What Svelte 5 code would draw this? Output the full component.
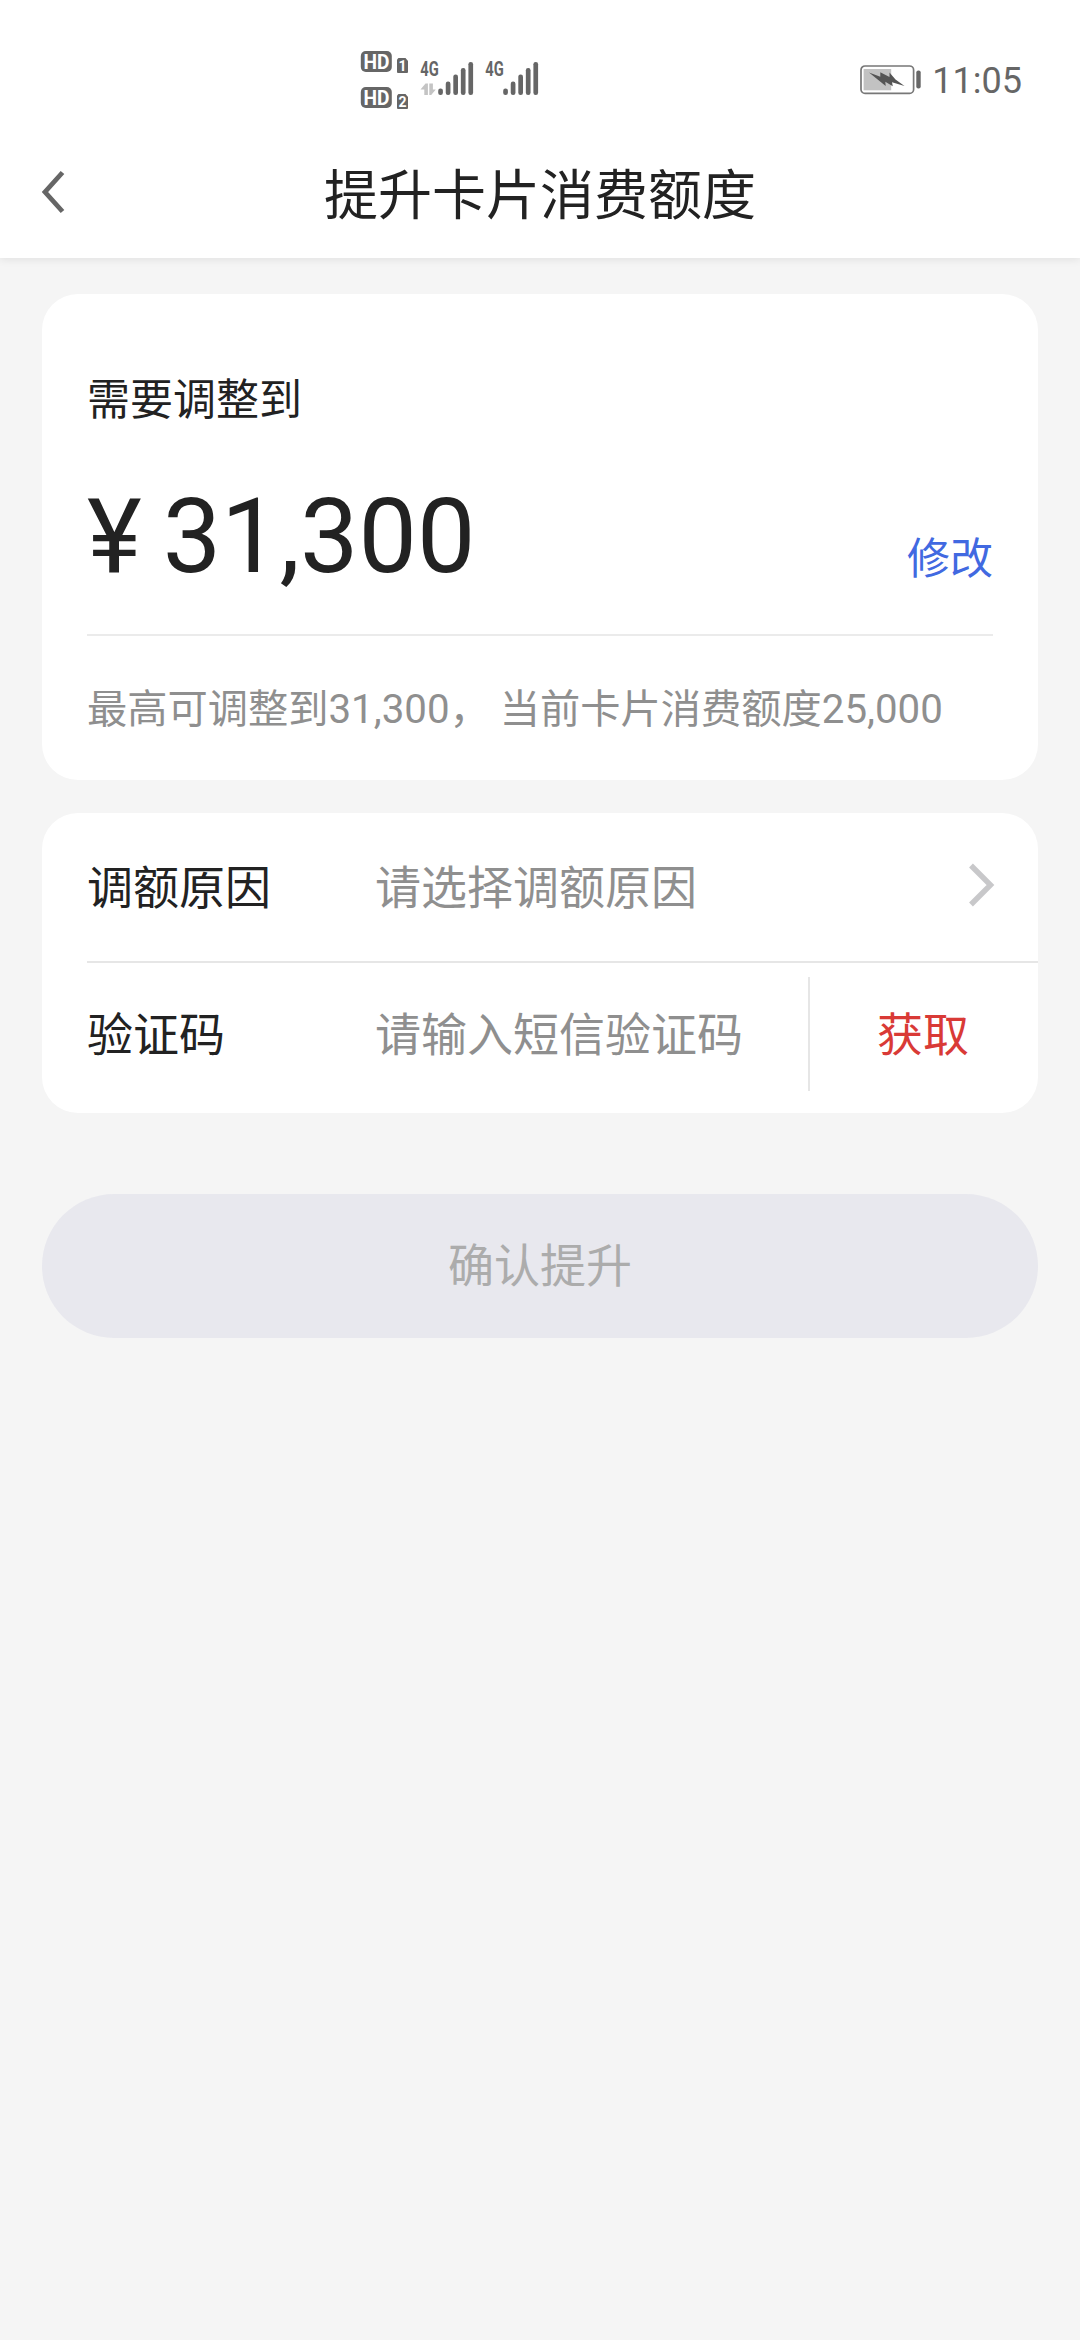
<script lang="ts">
  let { amount = 31300, maxAmount = 31300, currentAmount = 25000 } = $props();

  const fmt = (n: number) => n.toLocaleString('en-US');
  const bars = [6.5, 13.5, 20.5, 27, 33];

  let reason = $state('');
  let code = $state('');
  let ready = $derived(reason !== '' && code !== '');
</script>

{#snippet signal(x: number)}
  <text x={x} y="46.4" class="net" textLength="18.5" lengthAdjust="spacingAndGlyphs">4G</text>
  {#each bars as h, i}
    <rect x={x + 18 + i * 7.55} y={65 - h} width="4.7" height={h} rx="2.2" />
  {/each}
{/snippet}

<div class="page">
  <div class="top">
    <div class="status">
      <svg class="signals" width="190" height="70" viewBox="0 0 190 70" fill="#666">
        {#each [1, 2] as sim}
          <g transform="translate(0 {(sim - 1) * 36})">
            <rect x="0.8" y="21" width="31" height="21" rx="5" />
            <text x="3.4" y="38.6" class="hd" textLength="26" lengthAdjust="spacingAndGlyphs">HD</text>
            <path d="M38.5 28h7l2.5 3v11q0 1-1 1h-9q-1 0-1-1V29.5z" />
            <text x="42.4" y="40.8" class="sim">{sim}</text>
          </g>
        {/each}
        {@render signal(60.2)}
        {@render signal(125.2)}
        <path d="M60.5 59.5l5-6h2.4V65h-3.6v-5.5zM69.3 53.5h3.6v6h2.9l-4.6 5.5h-1.9z" fill="#c4c4c4" />
      </svg>
      <div class="right">
        <svg width="62" height="30" viewBox="0 0 62 30">
          <rect x="1" y="1" width="52.6" height="27.4" rx="4" fill="none" stroke="#777" stroke-width="1.7" />
          <rect x="3.6" y="4" width="27.6" height="21.3" fill="#c2c2c2" />
          <path d="M9 7.5l11.3 4.2V7.2l9.2 4.8V7.5l6 7 9 6.5-12.5-3.8.8 4-7.5-4.4.4 4.2z" fill="#555" />
          <rect x="56.3" y="5.6" width="4.4" height="18" rx="2" fill="#666" />
        </svg>
        <span class="time">11:05</span>
      </div>
    </div>
    <header class="nav">
      <button class="back" aria-label="返回">
        <svg width="26" height="44" viewBox="0 0 26 44">
          <path d="M21.5 2.5L4 22l17.5 19.5" fill="none" stroke="#666" stroke-width="4.8" />
        </svg>
      </button>
      <h1>提升卡片消费额度</h1>
    </header>
  </div>

  <section class="card limit">
    <div class="label">需要调整到</div>
    <div class="amount-row">
      <div class="amount"><span class="yen">¥</span>{fmt(amount)}</div>
      <button class="edit">修改</button>
    </div>
    <p class="hint">最高可调整到{fmt(maxAmount)}， 当前卡片消费额度{fmt(currentAmount)}</p>
  </section>

  <section class="card form">
    <div class="row">
      <span class="name">调额原因</span>
      <span class="value">{reason || '请选择调额原因'}</span>
      <svg class="arrow" width="28" height="44" viewBox="0 0 28 44">
        <path d="M4 2.5L23.5 22 4 41.5" fill="none" stroke="#c8c8ca" stroke-width="5.4" />
      </svg>
    </div>
    <div class="row code">
      <span class="name">验证码</span>
      <input class="value" placeholder="请输入短信验证码" bind:value={code} />
      <button class="get">获取</button>
    </div>
  </section>

  <button class="submit" disabled={!ready}>确认提升</button>
</div>

<style>
  :global(body) { background: #f5f5f5; }
  .page {
    min-height: 2340px; background: #f5f5f5; color: #222;
    font-family: Roboto, "Noto Sans CJK SC", sans-serif;
  }
  button { border: none; background: none; padding: 0; font: inherit; cursor: pointer; }
  svg { display: block; }

  .top {
    height: 258px; background: #fff;
    box-shadow: 0 2px 8px rgba(0, 0, 0, 0.08);
  }
  .status {
    height: 130px; box-sizing: border-box; padding: 30px 58px 0 360px;
    display: flex; justify-content: space-between;
  }
  .signals { overflow: visible; }
  .net { font: 700 21px "Roboto", sans-serif; }
  .hd { font: 700 20px "Roboto", sans-serif; fill: #fff; }
  .sim { font: 700 14px "Roboto", sans-serif; fill: #fff; text-anchor: middle; }
  .right { display: flex; align-items: center; gap: 10px; height: 99px; }
  .time { font-size: 36px; color: #666; line-height: 40px; padding-top: 3px; }

  .nav {
    height: 128px; display: grid; align-items: center;
    grid-template-columns: 120px 1fr 120px;
  }
  .back { padding-left: 41px; height: 124px; margin-top: -4px; }
  h1 { margin: 0; padding-top: 5px; text-align: center; font-size: 54px; font-weight: 400; line-height: 80px; }

  .card { margin: 0 42px; background: #fff; border-radius: 36px; }
  .limit { margin-top: 36px; height: 486px; box-sizing: border-box; padding: 74px 45px 0; }
  .label { font-size: 43px; line-height: 64px; }
  .amount-row {
    display: flex; justify-content: space-between; align-items: flex-end;
    height: 204px; box-sizing: border-box; padding-bottom: 37px;
    border-bottom: 2px solid #ebebeb;
  }
  .amount { font-size: 104px; line-height: 120px; }
  .yen { margin-right: 21px; }
  .edit { font-size: 43px; line-height: 64px; color: #4169e1; margin-bottom: 6px; }
  .hint {
    margin: 44px 0 0; font-size: 40.25px; line-height: 60px;
    color: #8f8f8f; white-space: nowrap;
  }

  .form { margin-top: 33px; height: 300px; padding-left: 45px; box-sizing: border-box; }
  .row { height: 148px; display: flex; align-items: center; font-size: 46px; line-height: 68px; }
  .row + .row { border-top: 2px solid #e6e6e6; }
  .name { width: 288px; flex-shrink: 0; padding-top: 2px; }
  .value { flex: 1; min-width: 0; color: #8f8f8f; padding-top: 2px; }
  .arrow { margin: -4px 43px 0 0; }
  input.value { border: none; outline: none; padding: 2px 0 0; font: inherit; background: none; }
  input::placeholder { color: #8f8f8f; opacity: 1; }
  .code { height: 144px; box-sizing: border-box; }
  .get {
    width: 230px; height: 114px; border-left: 2px solid #e6e6e6; padding: 2px 2px 0 0;
    color: #d93a36; flex-shrink: 0; box-sizing: border-box;
  }

  .submit {
    display: block; width: 996px; height: 144px; margin: 81px 42px 0;
    border-radius: 72px; background: #e8e8ee; color: #acacac;
    font-size: 46px; line-height: 68px;
  }
</style>
